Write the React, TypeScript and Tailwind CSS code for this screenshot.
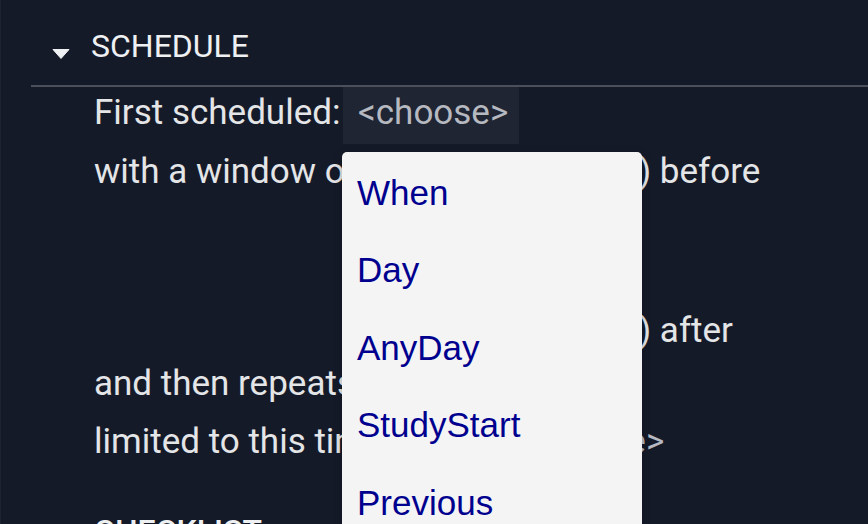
import React from 'react';

const menuItems = ['When', 'Day', 'AnyDay', 'StudyStart', 'Previous'];

function Caret() {
  return (
    <svg width="18" height="10" viewBox="0 0 18 10" className="shrink-0 mt-[31px]">
      <path d="M1 0.5 H17 L9 9.5 Z" fill="#eef0f2" stroke="#eef0f2" strokeLinejoin="round" />
    </svg>
  );
}

function ChooseButton({ active }: { active?: boolean }) {
  return (
    <span
      className={
        active
          ? 'inline-block h-[57px] pl-[15px] pr-[11px] bg-[#1f2533] text-[#b6b9c0] align-top'
          : 'inline-block h-[57px] pl-[15px] pr-[11px] text-[#b6b9c0] align-top'
      }
    >
      &lt;choose&gt;
    </span>
  );
}

export default function App() {
  return (
    <div className="relative w-[868px] h-[524px] overflow-hidden bg-[#151a29] border-l border-l-[#1d2333] font-['Roboto','Liberation_Sans',sans-serif] text-[#e4e5e7]">
      {/* Schedule header */}
      <div className="flex items-start pl-[51px] pt-[18px] gap-[21px] text-[32px]">
        <Caret />
        <span className="leading-[57px] text-[#eef0f2]">SCHEDULE</span>
      </div>
      <div className="ml-[30px] mt-[10px] h-[2px] bg-[#4a4f5b]" />

      <div className="pl-[93px] text-[35px] leading-[51px] whitespace-nowrap">
        <div className="h-[59px]">
          <span className="inline-block w-[249px] align-top">First scheduled:</span>
          <ChooseButton active />
        </div>
        <div className="h-[57px]">
          <span className="inline-block w-[545px]">with a window of (</span>) before
        </div>
        <div className="h-[102px]" />
        <div className="h-[53px]">
          <span className="inline-block w-[545px]" />) after
        </div>
        <div className="h-[58px]">and then repeats every day</div>
        <div className="h-[57px]">
          <span className="inline-block w-[405px] align-top">limited to this time</span>
          <ChooseButton />
        </div>
        <div className="mt-[30px] text-[32px] leading-[57px] font-medium text-[#eef0f2]">CHECKLIST</div>
      </div>

      {/* open dropdown for <choose> */}
      <div className="absolute left-[341px] top-[152px] w-[300px] h-[420px] pt-[2px] rounded-t-[5px] bg-[#f4f4f5] shadow-[0_2px_8px_rgba(0,0,0,0.25)] font-['Liberation_Sans',Arial,sans-serif] text-[35px] text-[#00008f]">
        {menuItems.map((item) => (
          <div key={item} className="h-[77.5px] pl-[15px] flex items-center">
            {item}
          </div>
        ))}
      </div>
    </div>
  );
}
